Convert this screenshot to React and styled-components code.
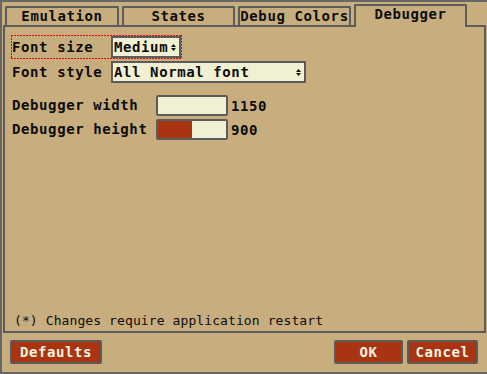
import React from "react";
import styled, { createGlobalStyle } from "styled-components";

const GlobalStyle = createGlobalStyle`
  html, body {
    margin: 0;
    padding: 0;
    background: #c8ae7e;
  }
  * {
    box-sizing: border-box;
  }
`;

const FONT = `"DejaVu Sans Mono", "Liberation Mono", monospace`;

const Frame = styled.div`
  width: 487px;
  height: 374px;
  display: flex;
  flex-direction: column;
  background: #c8ae7e;
  border-top: 2px solid #676767;
  border-left: 2px solid #676767;
  border-bottom: 2px solid #676767;
  font-family: ${FONT};
  font-size: 14px;
  color: #0c0c0c;
`;

const TabBar = styled.div`
  display: flex;
  align-items: flex-end;
  gap: 3px;
  padding: 2px 0 0 3px;
`;

const Tab = styled.div`
  position: relative;
  width: ${({ $w }) => $w}px;
  height: ${({ $active }) => ($active ? "23px" : "19px")};
  margin-bottom: ${({ $active }) => ($active ? "-2px" : "0")};
  padding-bottom: ${({ $active }) => ($active ? "4px" : "0")};
  z-index: ${({ $active }) => ($active ? 1 : 0)};
  display: flex;
  align-items: center;
  justify-content: center;
  background: #c8ae7e;
  border: 2px solid #5c5c5c;
  border-bottom: none;
  border-radius: 2px 2px 0 0;
  font-weight: bold;
  letter-spacing: 0.6px;
  line-height: 15px;
`;

const Panel = styled.div`
  margin-left: 1px;
  width: 483px;
  height: 308px;
  border: 2px solid #5c5c5c;
  display: flex;
  flex-direction: column;
  padding: 8px 0 3px 6px;
`;

const Rows = styled.div`
  display: flex;
  flex-direction: column;
  align-items: flex-start;
  gap: 1px;
`;

const dashH = "repeating-linear-gradient(90deg, #e00c0c 0 2px, transparent 2px 3px)";
const dashV = "repeating-linear-gradient(180deg, #e00c0c 0 2px, transparent 2px 3px)";

const Field = styled.div`
  position: relative;
  display: inline-flex;
  align-items: center;
  padding: 1px;

  &::before {
    content: "";
    display: ${({ $focused }) => ($focused ? "block" : "none")};
    position: absolute;
    inset: 0;
    pointer-events: none;
    background:
      ${dashH} top / 100% 1px no-repeat,
      ${dashH} bottom / 100% 1px no-repeat,
      ${dashV} left / 1px 100% no-repeat,
      ${dashV} right / 1px 100% no-repeat;
  }
`;

const Label = styled.span`
  width: ${({ $w }) => $w}px;
  font-weight: bold;
  letter-spacing: 0.6px;
  white-space: nowrap;
  line-height: 15px;
`;

const Select = styled.div`
  width: ${({ $w }) => $w}px;
  height: 22px;
  display: flex;
  align-items: center;
  justify-content: space-between;
  padding: 0 3px 0 1px;
  background: #f2f0d2;
  border: 2px solid #5c5c5c;
  font-weight: bold;
  letter-spacing: 0.6px;
  line-height: 15px;
  white-space: nowrap;
`;

const Arrows = styled.svg`
  width: 5px;
  height: 7px;
  flex: none;
`;

const Sliders = styled.div`
  display: flex;
  flex-direction: column;
  gap: 3px;
  margin: 11px 0 0 1px;
`;

const SliderRow = styled.div`
  display: flex;
  align-items: center;
  height: 21px;
`;

const Track = styled.div`
  width: 72px;
  height: 21px;
  background: #f2f0d2;
  border: 2px solid #5c5c5c;
  border-radius: 2px;
  overflow: hidden;
`;

const Fill = styled.div`
  height: 100%;
  background: #a93411;
`;

const Value = styled.span`
  margin-left: 3px;
  font-weight: bold;
  letter-spacing: 0.6px;
`;

const Note = styled.div`
  margin-top: auto;
  padding-left: 3px;
  font-size: 13px;
  line-height: 15px;
  letter-spacing: 0.1px;
`;

const Footer = styled.div`
  display: flex;
  justify-content: space-between;
  padding: 7px 9px 0 8px;
`;

const Group = styled.div`
  display: flex;
  gap: 4px;
`;

const Button = styled.button`
  width: ${({ $w }) => $w}px;
  height: 24px;
  padding: 0;
  background: #a93411;
  border: 2px solid #5a5a5a;
  border-radius: 2px;
  color: #f8f4e2;
  font-family: ${FONT};
  font-size: 14px;
  font-weight: bold;
  letter-spacing: 0.6px;
  line-height: 15px;
`;

const tabs = [
  { name: "Emulation", w: 114 },
  { name: "States", w: 113 },
  { name: "Debug Colors", w: 113 },
  { name: "Debugger", w: 113, active: true },
];

const sliders = [
  { label: "Debugger width", value: 1150, min: 1150, max: 2000 },
  { label: "Debugger height", value: 900, min: 600, max: 1200 },
];

function UpDown() {
  return (
    <Arrows viewBox="0 0 5 7">
      <path d="M2.5 0 L5 3 L0 3 Z M0 4 L5 4 L2.5 7 Z" fill="#111" />
    </Arrows>
  );
}

export default function App() {
  return (
    <>
      <GlobalStyle />
      <Frame>
        <TabBar>
          {tabs.map((t) => (
            <Tab key={t.name} $w={t.w} $active={t.active}>
              {t.name}
            </Tab>
          ))}
        </TabBar>
        <Panel>
          <Rows>
            <Field $focused>
              <Label $w={99}>Font size</Label>
              <Select $w={70}>
                Medium
                <UpDown />
              </Select>
            </Field>
            <Field>
              <Label $w={99}>Font style</Label>
              <Select $w={195}>
                All Normal font
                <UpDown />
              </Select>
            </Field>
          </Rows>
          <Sliders>
            {sliders.map((s) => (
              <SliderRow key={s.label}>
                <Label $w={144}>{s.label}</Label>
                <Track>
                  <Fill style={{ width: `${((s.value - s.min) / (s.max - s.min)) * 100}%` }} />
                </Track>
                <Value>{s.value}</Value>
              </SliderRow>
            ))}
          </Sliders>
          <Note>(*) Changes require application restart</Note>
        </Panel>
        <Footer>
          <Button $w={92}>Defaults</Button>
          <Group>
            <Button $w={69}>OK</Button>
            <Button $w={71}>Cancel</Button>
          </Group>
        </Footer>
      </Frame>
    </>
  );
}
